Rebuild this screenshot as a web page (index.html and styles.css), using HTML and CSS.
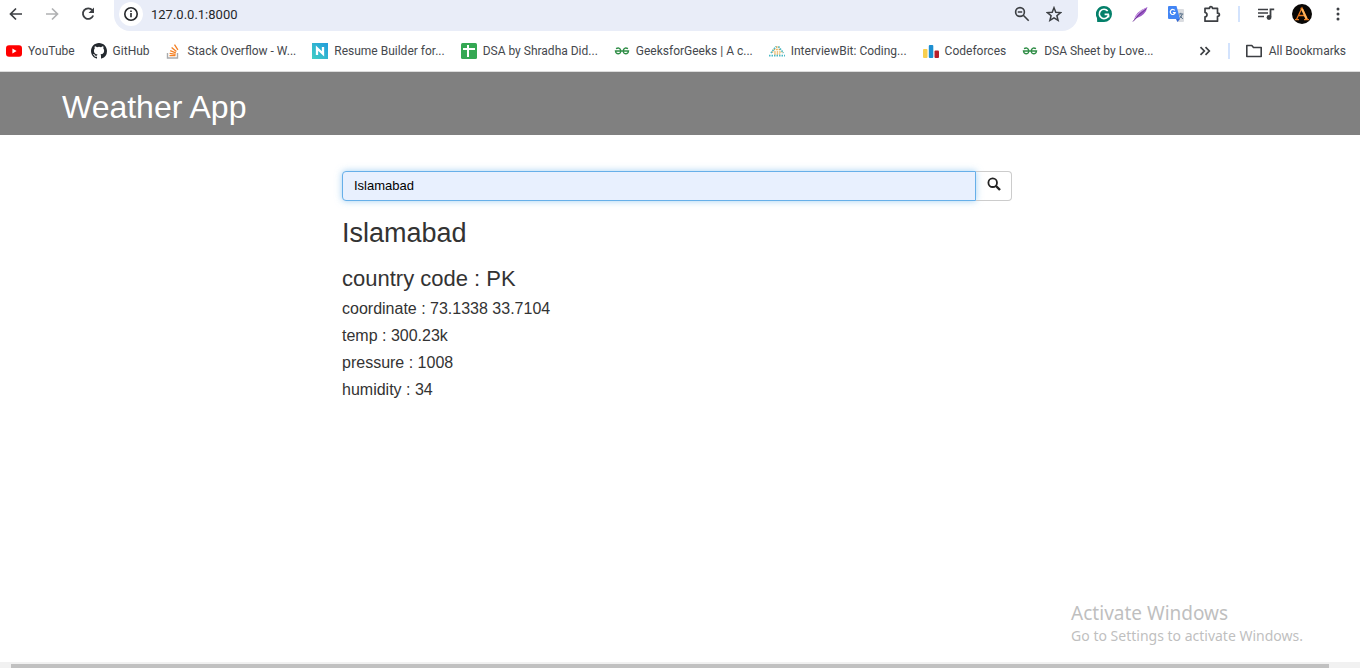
FILE: index.html
```html
<!DOCTYPE html>
<html lang="en">
<head>
<meta charset="utf-8">
<title>Weather App</title>
<link rel="stylesheet" href="styles.css">
</head>
<body>
<div class="browser">
  <div class="toolbar">
    <nav class="nav-buttons" aria-label="Navigation">
      <button type="button" class="icon-btn" aria-label="Back"><svg width="16" height="16" viewBox="0 0 16 16" fill="none" stroke="#3c3f43" stroke-width="1.7"><path d="M14 8H3M8 2.500L2.500 8 8 13.500"/></svg></button>
      <button type="button" class="icon-btn" aria-label="Forward"><svg width="16" height="16" viewBox="0 0 16 16" fill="none" stroke="#b0b1b3" stroke-width="1.700"><path d="M2 8h11M8 2.500L13.500 8 8 13.500"/></svg></button>
      <button type="button" class="icon-btn" aria-label="Reload"><svg width="16" height="16" viewBox="0 0 16 16"><path d="M12.300 4.200A5.300 5.300 0 1 0 13.200 9.500" fill="none" stroke="#3c3f43" stroke-width="1.800"/><path d="M14 1.500V7H8.500z" fill="#3c3f43"/></svg></button>
    </nav>
    <div class="omnibox">
      <button type="button" class="site-info" aria-label="Site information"><svg width="16" height="16" viewBox="0 0 16 16"><circle cx="8" cy="8" r="6.200" fill="none" stroke="#25272a" stroke-width="1.600"/><path d="M8 7v4.200M8 4.400v1.600" stroke="#25272a" stroke-width="1.600"/></svg></button>
      <input class="address" type="text" aria-label="Address" value="127.0.0.1:8000">
      <button type="button" class="icon-btn" aria-label="Zoom"><svg width="16" height="16" viewBox="0 0 16 16" fill="none" stroke="#3c3f43" stroke-width="1.600"><circle cx="6" cy="6" r="4.400"/><path d="M9.300 9.300l5.400 5.400M3.800 6h4.400"/></svg></button>
      <button type="button" class="icon-btn" aria-label="Bookmark this page"><svg width="16" height="16" viewBox="0 0 16 16" fill="none" stroke="#3c3f43" stroke-width="1.500"><path d="M8 1.700l1.800 4.500 4.800.400-3.700 3.100 1.200 4.700L8 11.900l-4.100 2.500 1.200-4.700L1.400 6.600l4.800-.400z"/></svg></button>
    </div>
    <div class="extensions">
      <button type="button" class="icon-btn" aria-label="Grammarly"><svg width="16" height="16" viewBox="0 0 16 16"><path d="M8 0a8 8 0 1 1 0 16H1.200L1 12A8 8 0 0 1 8 0z" fill="#04806a"/><path d="M11.700 5A4.700 4.700 0 1 0 12.500 9.300M13 8.400H8.600M12.600 8.400v3.200" fill="none" stroke="#fff" stroke-width="1.600"/></svg></button>
      <button type="button" class="icon-btn" aria-label="Feather extension"><svg width="16" height="16" viewBox="0 0 16 16"><path d="M2 14Q3 6 15.500 1 13.500 9.500 4.500 12.200z" fill="#9b59c6"/><path d="M3 12Q6 6 13.500 2.500" stroke="#d2a8e8" fill="none"/><path d="M1 15.500Q6 9 14 3" stroke="#6f3496" fill="none"/></svg></button>
      <button type="button" class="icon-btn" aria-label="Translate"><svg width="16" height="16" viewBox="0 0 16 16"><path d="M6 3h9q1 0 1 1v11q0 1-1 1H9z" fill="#dadce0"/><path d="M1 0h7.500L12 13H1q-1 0-1-1V1q0-1 1-1z" fill="#4285f4"/><path d="M8 13h4L9.500 16z" fill="#3367d6"/><path d="M6.800 4.500A2.500 2.500 0 1 0 7.200 6.600H4.900" fill="none" stroke="#fff" stroke-width="1.200"/><path d="M10.800 8h4.500M12.800 6.800V8M14.300 8q-.800 3-2.800 4.300M11.800 9.500l3 3.500" stroke="#587089" fill="none"/></svg></button>
      <button type="button" class="icon-btn" aria-label="Extensions"><svg width="18" height="18" viewBox="0 0 18 18"><path d="M2 3.300h4.500Q6.500 1.600 8 1.600T9.500 3.300h5v4.900q1.900 0 1.900 1.600t-1.900 1.600v4.800H2v-4.300q2-.300 2-2.200T2 7.500z" fill="none" stroke="#3c3f43" stroke-width="1.700" stroke-linejoin="round"/></svg></button>
      <span class="divider"></span>
      <button type="button" class="icon-btn" aria-label="Media controls"><svg width="18" height="18" viewBox="0 0 18 18"><path d="M1 4.500h10M1 8h10M1 11.500h6" stroke="#3c3f43" stroke-width="1.700"/><path d="M13.500 12V4.300h3.700" fill="none" stroke="#3c3f43" stroke-width="1.800"/><circle cx="12" cy="12.500" r="2.400" fill="#3c3f43"/></svg></button>
      <button type="button" class="icon-btn" aria-label="Profile"><svg width="20" height="20" viewBox="0 0 20 20"><circle cx="10" cy="10" r="10" fill="#090705"/><path d="M4.500 15.500L10 4l5.500 11.500M7 11.500h6M3 15.700h4M12 15.700h5M8.500 4.500h2" fill="none" stroke="#e8791f" stroke-width="1.300"/><path d="M10 5l4.500 10" stroke="#ffb45b" stroke-width="2"/></svg></button>
      <button type="button" class="icon-btn" aria-label="Menu"><svg width="18" height="18" viewBox="0 0 18 18" fill="#3c3f43"><circle cx="9" cy="4" r="1.500"/><circle cx="9" cy="9" r="1.500"/><circle cx="9" cy="14" r="1.500"/></svg></button>
    </div>
  </div>
  <nav class="bookmarks" aria-label="Bookmarks">
    <a href="#"><svg width="16" height="16" viewBox="0 0 16 16"><rect y="2.300" width="16" height="11.400" rx="3" fill="#f00"/><path d="M6.400 5.600v4.800L10.600 8z" fill="#fff"/></svg>YouTube</a>
    <a href="#"><svg width="16" height="16" viewBox="0 0 16 16"><path fill="#24292f" d="M8 0C3.580 0 0 3.580 0 8c0 3.540 2.290 6.530 5.470 7.590.400.070.550-.170.550-.380 0-.190-.010-.820-.010-1.490-2.010.370-2.530-.490-2.690-.940-.090-.230-.480-.940-.820-1.130-.280-.150-.680-.520-.010-.530.630-.010 1.080.580 1.230.820.720 1.210 1.870.870 2.330.660.070-.520.280-.870.510-1.070-1.780-.200-3.640-.890-3.640-3.950 0-.870.310-1.590.820-2.150-.080-.200-.360-1.020.080-2.120 0 0 .670-.210 2.200.820a7.600 7.600 0 0 1 4 0c1.530-1.040 2.200-.820 2.200-.820.440 1.100.160 1.920.080 2.120.510.560.820 1.270.820 2.150 0 3.070-1.870 3.750-3.650 3.950.290.250.540.730.540 1.480 0 1.070-.010 1.930-.010 2.200 0 .210.150.460.550.380A8 8 0 0 0 16 8c0-4.420-3.580-8-8-8z"/></svg>GitHub</a>
    <a href="#"><svg width="16" height="16" viewBox="0 0 16 16" fill="none"><path d="M1.500 10v5h10v-5" stroke="#a9abad" stroke-width="1.400"/><path d="M3.500 12.700h6M3.600 10.300l6 1M4.200 7.600l5.600 2.200M5.600 4.600l4.800 3.900M8.500 1.600l3.400 5.200" stroke="#f48024" stroke-width="1.300"/></svg>Stack Overflow - W...</a>
    <a href="#"><svg width="16" height="16" viewBox="0 0 16 16"><defs><linearGradient id="novo" x1="0" y1="1" x2="1" y2="0"><stop stop-color="#42d0c4"/><stop offset="1" stop-color="#219bdc"/></linearGradient></defs><rect width="16" height="16" fill="url(#novo)"/><path d="M5 12V5.200l6 5.600V4" fill="none" stroke="#fff" stroke-width="2.300"/></svg>Resume Builder for...</a>
    <a href="#"><svg width="16" height="16" viewBox="0 0 16 16"><rect width="16" height="16" rx="1.500" fill="#34a853"/><path d="M7 2v12M2 6h12" stroke="#fff" stroke-width="2"/></svg>DSA by Shradha Did...</a>
    <a href="#"><svg width="16" height="16" viewBox="0 0 16 16" fill="none" stroke="#2f8d46" stroke-width="1.400"><path d="M2 5.600q3.500-1.500 4.500 1.100.800 4-2.200 4.100Q1.800 10.800 1.500 8h13q-.300 2.800-2.800 2.800-3-.100-2.200-4.100 1-2.600 4.500-1.100"/></svg>GeeksforGeeks | A c...</a>
    <a href="#"><svg width="16" height="16" viewBox="0 0 16 16" fill="none" stroke-width="1.700" stroke-dasharray="1.500 1"><path d="M7 4h3M4.700 6.500h6.500" stroke="#e9a23b"/><path d="M2.700 9h11M5.200 11h6" stroke="#eab15d"/><path d="M0 12.700h16M2 10l5-6.500M9.500 3.500l5 6.500" stroke="#49b9c5"/></svg>InterviewBit: Coding...</a>
    <a href="#"><svg width="16" height="16" viewBox="0 0 16 16"><rect y="6" width="4.500" height="9" rx="1" fill="#f8cf4f"/><rect x="5.800" y="2" width="4.500" height="13" rx="1" fill="#1c8fd1"/><rect x="11.500" y="7.500" width="4.500" height="7.500" rx="1" fill="#b81e29"/></svg>Codeforces</a>
    <a href="#"><svg width="16" height="16" viewBox="0 0 16 16" fill="none" stroke="#2f8d46" stroke-width="1.400"><path d="M2 5.600q3.500-1.500 4.500 1.100.800 4-2.200 4.100Q1.800 10.800 1.500 8h13q-.300 2.800-2.800 2.800-3-.100-2.200-4.100 1-2.600 4.500-1.100"/></svg>DSA Sheet by Love...</a>
    <div class="bookmarks-end">
      <button type="button" class="icon-btn" aria-label="More bookmarks"><svg width="16" height="16" viewBox="0 0 16 16" fill="none" stroke="#3c3f43" stroke-width="1.700"><path d="M3.500 4.200L7.300 8l-3.800 3.800M8.500 4.200L12.300 8l-3.800 3.800"/></svg></button>
      <span class="divider"></span>
      <a href="#"><svg width="18" height="16" viewBox="0 0 18 16"><path d="M1.800 2.500h5l1.700 2h7.700v9H1.800z" fill="none" stroke="#3c3f43" stroke-width="1.600" stroke-linejoin="round"/></svg>All Bookmarks</a>
    </div>
  </nav>
</div>
<header class="site-header"><h1>Weather App</h1></header>
<main class="content">
  <form class="search" onsubmit="return false">
    <input type="text" class="search-input" aria-label="City" value="Islamabad">
    <button type="submit" class="search-btn" aria-label="Search"><svg width="14" height="14" viewBox="0 0 14 14" fill="none" stroke="#222"><circle cx="5.700" cy="5.700" r="4.300" stroke-width="1.800"/><path d="M9 9l4 4" stroke-width="2.400"/></svg></button>
  </form>
  <h2>Islamabad</h2>
  <h3>country code : PK</h3>
  <p>coordinate : 73.1338 33.7104</p>
  <p>temp : 300.23k</p>
  <p>pressure : 1008</p>
  <p>humidity : 34</p>
</main>
<aside class="activation">
  <div class="activation-title">Activate Windows</div>
  <div class="activation-text">Go to Settings to activate Windows.</div>
</aside>
<div class="scrollbar"><div class="scroll-thumb"></div></div>
</body>
</html>
```
FILE: styles.css
```css
* { box-sizing: border-box; }
body {
  margin: 0;
  min-height: 100vh;
  display: flex;
  flex-direction: column;
  background: #fff;
  color: #333;
  font-family: "Liberation Sans", Arial, sans-serif;
  overflow: hidden;
}
button, input { font: inherit; border: 0; padding: 0; background: none; }
svg { display: block; flex: none; }
.browser {
  font-family: Roboto, "Open Sans", sans-serif;
  font-size: 12px;
  border-bottom: 1px solid #dcdcdc;
}
.toolbar { display: flex; height: 31px; }
.icon-btn { display: flex; align-items: center; justify-content: center; }
.nav-buttons { display: flex; align-items: center; gap: 20px; padding: 0 18px 3px 8px; }
.omnibox {
  flex: 1;
  display: flex;
  align-items: center;
  gap: 16px;
  padding: 0 16px 3px 5px;
  background: #e9edf8;
  border-radius: 0 0 16px 16px;
}
.site-info {
  display: flex;
  align-items: center;
  justify-content: center;
  width: 24px;
  height: 24px;
  border-radius: 50%;
  background: #fff;
}
.address { flex: 1; min-width: 0; margin-left: -8px; color: #25272a; font-size: 13px; }
.extensions { display: flex; align-items: center; gap: 16px; padding: 0 12px 3px 16px; }
.extensions .icon-btn { min-width: 20px; }
.divider { width: 2px; height: 16px; background: #d3e3fd; }
.bookmarks {
  display: flex;
  align-items: center;
  gap: 16px;
  height: 40px;
  padding: 0 14px 0 6px;
  white-space: nowrap;
}
.bookmarks a { display: flex; align-items: center; gap: 6px; color: #45484d; text-decoration: none; }
.bookmarks-end { display: flex; align-items: center; gap: 15px; margin-left: auto; }
.site-header { padding: 17px 62px 9px; background: #808080; color: #fff; }
h1, h2, h3, p { margin: 0; font-weight: 400; }
h1 { font-size: 32px; line-height: 37px; }
.content { flex: 1; padding: 36px 348px 0 342px; }
.search { display: flex; margin-bottom: 17px; }
.search-input {
  flex: 1;
  min-width: 0;
  height: 30px;
  padding: 0 11px 2px;
  border: 1px solid #66afe9;
  border-radius: 4px 0 0 4px;
  background: #e8f0fe;
  color: #000;
  font-size: 13px;
  box-shadow: 0 0 7px rgba(102, 175, 233, .6);
}
.search-btn {
  width: 36px;
  display: flex;
  align-items: center;
  justify-content: center;
  padding-bottom: 4px;
  border: 1px solid #ccc;
  border-left: 0;
  border-radius: 0 4px 4px 0;
}
h2 { font-size: 27px; line-height: 30px; margin-bottom: 18px; }
h3 { font-size: 22px; line-height: 26px; margin-bottom: 3px; }
p { font-size: 16px; line-height: 27px; }
.activation {
  align-self: flex-end;
  margin: 0 57px 16px 0;
  color: #bfbfbf;
  font-family: "Noto Sans", "Open Sans", sans-serif;
}
.activation-title { font-size: 19px; line-height: 26px; }
.activation-text { font-size: 14px; line-height: 20px; }
.scrollbar { height: 6px; padding: 2px 31px 0 11px; background: #f1f1f1; }
.scroll-thumb { height: 4px; background: #c1c1c1; }
```
